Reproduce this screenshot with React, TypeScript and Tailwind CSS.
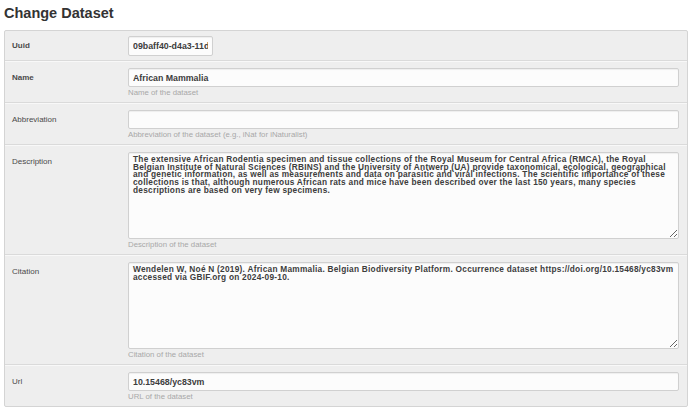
import React from 'react';

type Field = {
  label: string;
  bold?: boolean;
  value: string;
  help?: string;
  kind: 'short' | 'input' | 'textarea';
};

const fields: Field[] = [
  { label: 'Uuid', bold: true, value: '09baff40-d4a3-11de-a6f2-b8a03c50a862', kind: 'short' },
  { label: 'Name', bold: true, value: 'African Mammalia', help: 'Name of the dataset', kind: 'input' },
  { label: 'Abbreviation', value: '', help: 'Abbreviation of the dataset (e.g., iNat for iNaturalist)', kind: 'input' },
  {
    label: 'Description',
    value:
      'The extensive African Rodentia specimen and tissue collections of the Royal Museum for Central Africa (RMCA), the Royal Belgian Institute of Natural Sciences (RBINS) and the University of Antwerp (UA) provide taxonomical, ecological, geographical and genetic information, as well as measurements and data on parasitic and viral infections. The scientific importance of these collections is that, although numerous African rats and mice have been described over the last 150 years, many species descriptions are based on very few specimens.',
    help: 'Description of the dataset',
    kind: 'textarea',
  },
  {
    label: 'Citation',
    value:
      'Wendelen W, Noé N (2019). African Mammalia. Belgian Biodiversity Platform. Occurrence dataset https://doi.org/10.15468/yc83vm accessed via GBIF.org on 2024-09-10.',
    help: 'Citation of the dataset',
    kind: 'textarea',
  },
  { label: 'Url', value: '10.15468/yc83vm', help: 'URL of the dataset', kind: 'input' },
];

const boxClass =
  'block bg-[#fcfcfc] border border-[#d0d0d0] rounded-[2px] shadow-[inset_0_1px_1px_rgba(0,0,0,0.06)] text-[#3d3d3d] font-bold outline-none';

export default function App() {
  return (
    <div className="min-h-[415px] bg-white font-['Liberation_Sans',Arial,sans-serif] text-[#333]">
      {/* title */}
      <h1 className="pl-[4px] pt-[5px] pb-[8px] text-[14.5px] leading-[17px] font-bold text-[#333]">
        Change Dataset
      </h1>

      {/* form panel */}
      <div className="ml-[4px] mr-[1px] bg-[#eeeeee] border border-[#d4d4d4] rounded-[2px]">
        {fields.map((f, i) => (
          <div
            key={f.label}
            className={`flex pl-[7px] pr-[8px] border-b border-b-[#dadada] last:border-b-0 ${
              i === 0 ? 'pt-[5px] pb-[4px]' : 'pt-[6px] pb-[4px] border-t border-t-[#f8f8f8]'
            }`}
          >
            <div className="w-[116px] shrink-0">
              <div
                className={`h-[19px] flex items-center text-[8px] ${f.bold ? 'font-bold' : 'font-normal'} text-[#4a4a4a]`}
              >
                {f.label}
              </div>
            </div>

            <div className="flex-1 min-w-0">
              {f.kind === 'short' && (
                <input
                  readOnly
                  value={f.value}
                  className={`${boxClass} w-[85px] h-[20px] px-[4px] text-[8.8px]`}
                />
              )}
              {f.kind === 'input' && (
                <input readOnly value={f.value} className={`${boxClass} w-full h-[19px] px-[4px] text-[8.8px]`} />
              )}
              {f.kind === 'textarea' && (
                <textarea
                  readOnly
                  value={f.value}
                  className={`${boxClass} w-full h-[87px] px-[4px] py-[3px] text-[8.3px] tracking-[0.25px] leading-[7.7px] resize-y`}
                />
              )}
              {f.help && (
                <div className="mt-[1px] h-[10px] leading-[10px] text-[7.8px] text-[#a8a8a8]">{f.help}</div>
              )}
            </div>
          </div>
        ))}
      </div>
    </div>
  );
}
